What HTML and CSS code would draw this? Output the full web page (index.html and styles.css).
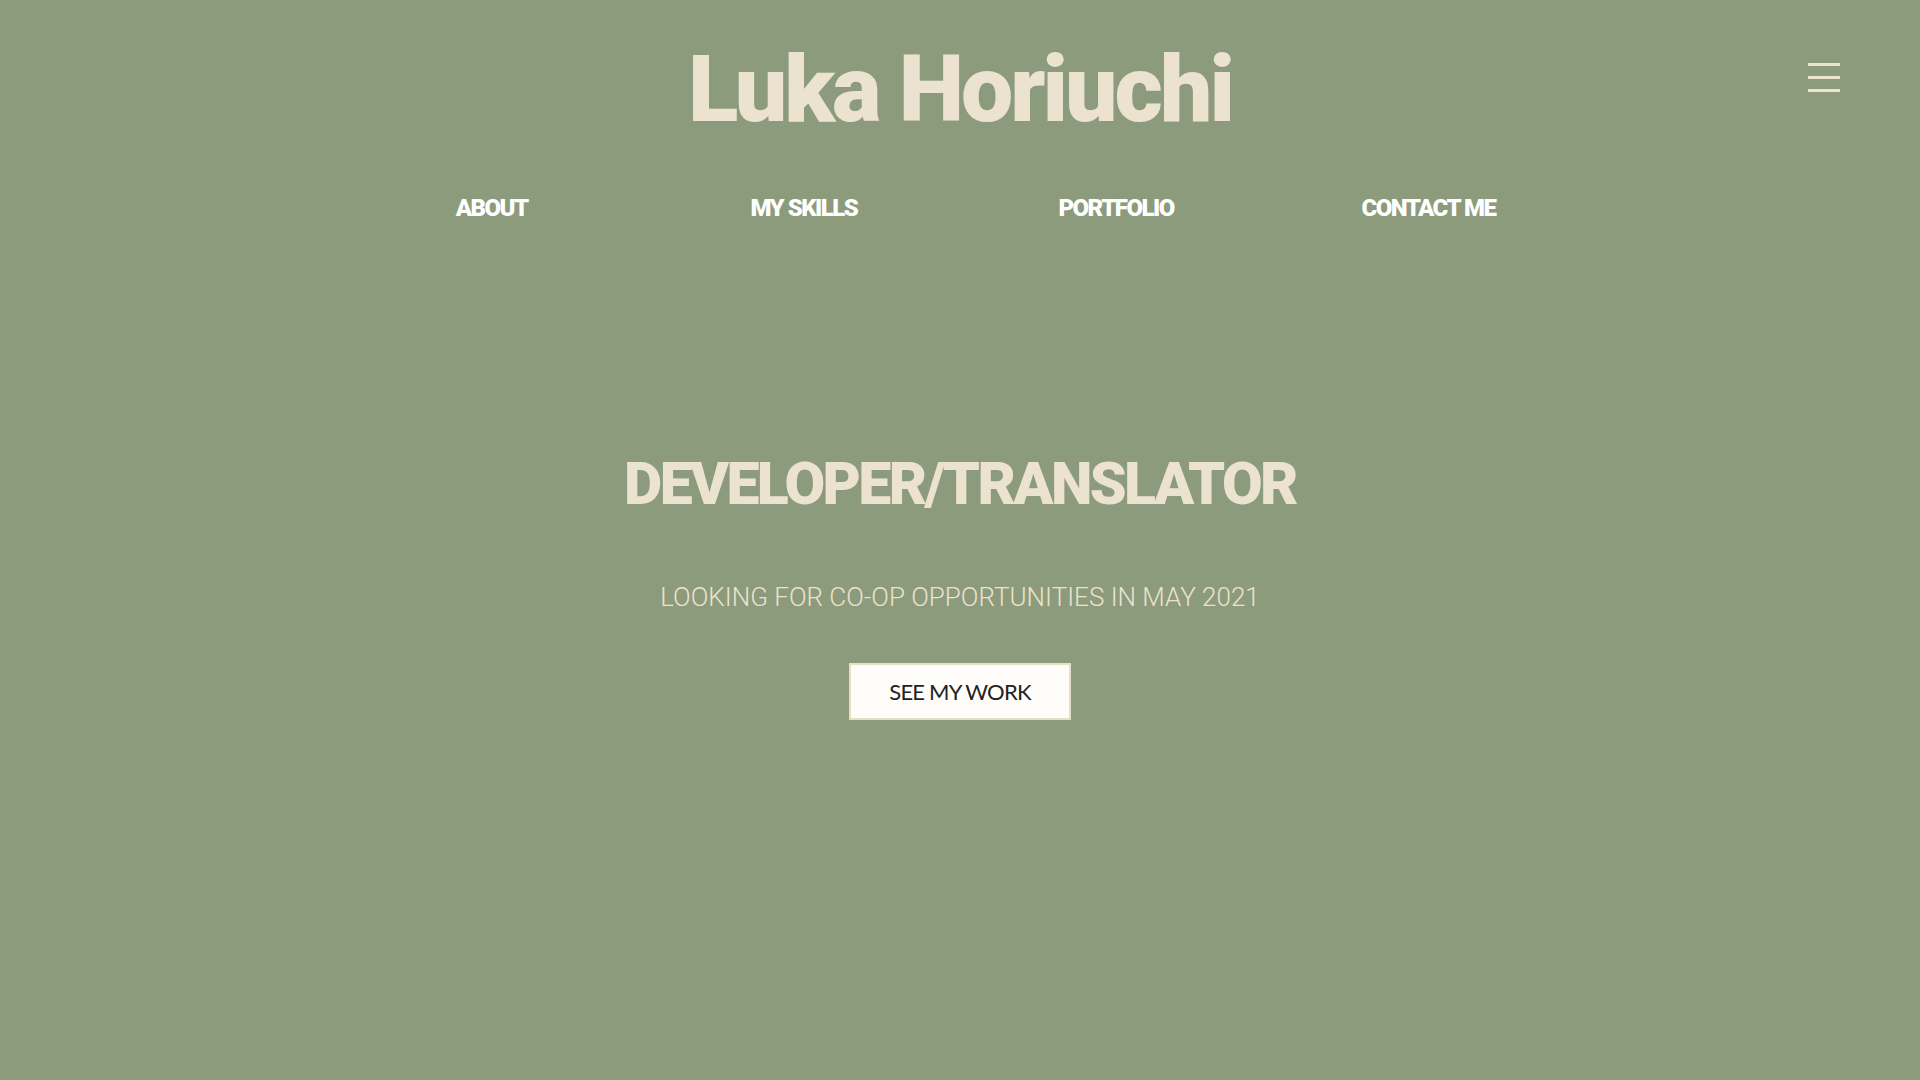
FILE: index.html
```html
<!DOCTYPE html>
<html lang="en">
<head>
<meta charset="utf-8">
<title>Luka Horiuchi</title>
<link rel="stylesheet" href="styles.css">
</head>
<body>
<header class="header">
  <h1 class="logo">Luka Horiuchi</h1>
  <button class="menu-btn" aria-label="Menu">
    <span></span><span></span><span></span>
  </button>
  <nav class="nav">
    <a href="#about">ABOUT</a>
    <a href="#skills">MY SKILLS</a>
    <a href="#portfolio">PORTFOLIO</a>
    <a href="#contact">CONTACT ME</a>
  </nav>
</header>
<main class="hero">
  <h2 class="hero-title">DEVELOPER/TRANSLATOR</h2>
  <p class="hero-sub">LOOKING FOR CO-OP OPPORTUNITIES IN MAY 2021</p>
  <a class="hero-btn" href="#portfolio">SEE MY WORK</a>
</main>
</body>
</html>
```

FILE: styles.css
```css
html, body {
  margin: 0;
  padding: 0;
}
body {
  background: #8c9b7b;
  color: #ebe2cf;
  font-family: Lato, "Liberation Sans", sans-serif;
  height: 1080px;
  overflow: hidden;
}
.header {
  position: relative;
  display: flex;
  flex-direction: column;
  align-items: center;
}
.logo {
  margin: 0;
  padding-top: 35px;
  font-family: Roboto, sans-serif;
  font-weight: 900;
  font-size: 93px;
  line-height: 110px;
  letter-spacing: -3px;
  color: #ebe2cf;
}
.menu-btn {
  position: absolute;
  top: 63px;
  right: 80px;
  width: 32px;
  height: 29px;
  padding: 0;
  border: 0;
  background: transparent;
  display: flex;
  flex-direction: column;
  justify-content: space-between;
}
.menu-btn span {
  display: block;
  height: 3px;
  width: 32px;
  background: #ebe2cf;
}
.nav {
  width: 1249px;
  display: grid;
  grid-template-columns: repeat(4, 1fr);
  margin-top: 48px;
}
.nav a {
  text-align: center;
  color: #ffffff;
  text-decoration: none;
  font-family: Roboto, sans-serif;
  font-weight: 900;
  font-size: 24px;
  letter-spacing: -1.5px;
  line-height: 30px;
}
.hero {
  display: flex;
  flex-direction: column;
  align-items: center;
  padding-top: 226px;
}
.hero-title {
  margin: 0;
  font-family: Roboto, sans-serif;
  font-weight: 900;
  font-size: 59px;
  line-height: 70px;
  letter-spacing: -2.6px;
  color: #ebe2cf;
}
.hero-sub {
  margin: 63px 0 0;
  font-family: Roboto, sans-serif;
  font-weight: 300;
  font-size: 26px;
  line-height: 30px;
  letter-spacing: 0;
  color: #ebe2cf;
}
.hero-btn {
  margin-top: 51px;
  display: flex;
  align-items: center;
  justify-content: center;
  width: 218px;
  height: 53px;
  background: #fffdf9;
  border: 2px solid #e6dec6;
  color: #222222;
  text-decoration: none;
  font-family: Lato, sans-serif;
  font-weight: 400;
  font-size: 22px;
  letter-spacing: -0.8px;
}
```
